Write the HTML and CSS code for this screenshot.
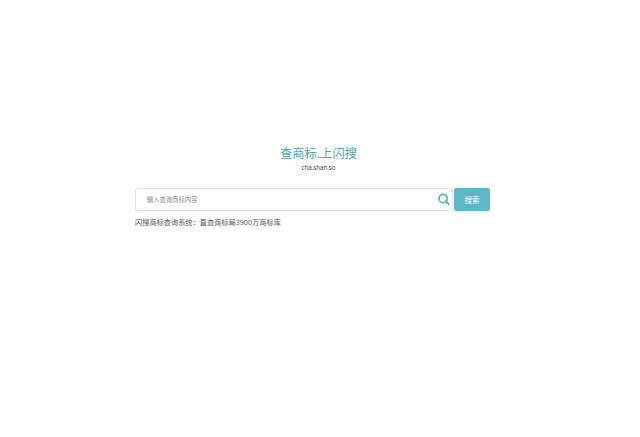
FILE: index.html
```html
<!DOCTYPE html>
<html lang="zh-CN">

<head>
    <meta charset="UTF-8">
    <meta name="viewport" content="width=device-width, initial-scale=1.0">
    <title>查商标上闪搜</title>
    <link rel="stylesheet" href="styles.css">
</head>

<body>
    <main class="search-page">
        <header class="brand">
            <h1>查商标.上闪搜</h1>
            <p>cha.shan.so</p>
        </header>

        <section class="search-area">
            <form class="search-form">
                <div class="search-box">
                    <input type="text" placeholder="输入查询商标内容">
                    <svg class="search-icon" width="12" height="13" viewBox="0 0 14 14">
                        <circle cx="6" cy="6" r="4.8" fill="none" stroke="#5bb8c4" stroke-width="2.2"></circle>
                        <path d="M9.6 9.6L12.6 12.6" stroke="#5bb8c4" stroke-width="2.6" stroke-linecap="round"></path>
                    </svg>
                </div>
                <button type="button" class="search-btn">搜索</button>
            </form>

            <p class="note">闪搜商标查询系统：直查商标局3900万商标库</p>
        </section>
    </main>
</body>

</html>
```

FILE: styles.css
```css
/* General Styles */
body {
    margin: 0;
    padding: 0;
    background: #fff;
    font-family: "Open Sans", "Noto Sans CJK SC", sans-serif;
}

.search-page {
    padding-top: 145px;
}

.brand {
    padding-right: 3px;
    text-align: center;
}

.brand h1 {
    margin: 0;
    font-size: 12.3px;
    line-height: 18px;
    font-weight: 400;
    color: #4fa3b1;
}

.brand p {
    margin: 0;
    font-size: 6.2px;
    line-height: 9px;
    color: #333;
}

/* Search Row */
.search-area {
    width: 355px;
    margin: 16px 0 0 135px;
}

.search-form {
    display: flex;
    gap: 1px;
}

.search-box {
    flex: 1;
    display: flex;
    align-items: center;
    height: 23px;
    box-sizing: border-box;
    padding: 0 2px 0 11px;
    border: 1px solid #e2e2e2;
    border-radius: 3px;
}

.search-box input {
    flex: 1;
    min-width: 0;
    border: none;
    outline: none;
    padding: 0;
    font-family: inherit;
    font-size: 6.3px;
    color: #555;
}

.search-box input::placeholder {
    color: #888;
}

.search-btn {
    width: 36px;
    height: 23px;
    padding: 0;
    border: none;
    border-radius: 2px;
    background: #5bb8c4;
    color: #fff;
    font-family: inherit;
    font-size: 7.5px;
}

.note {
    margin: 6px 0 0;
    font-size: 7.2px;
    line-height: 10px;
    color: #555;
}
```
